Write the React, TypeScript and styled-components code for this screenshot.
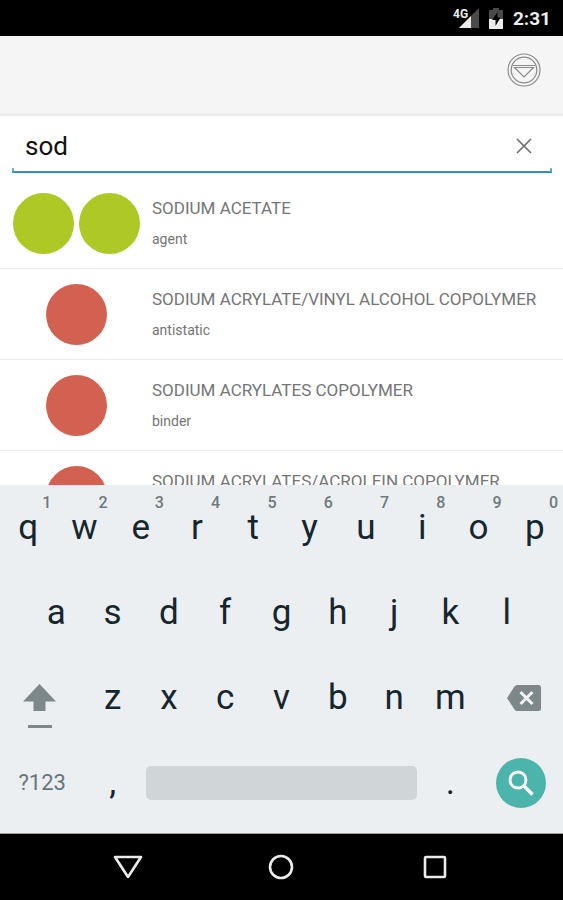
import React, { useState } from 'react';
import styled, { createGlobalStyle } from 'styled-components';

const GlobalStyle = createGlobalStyle`
  *, *::before, *::after { box-sizing: border-box; }
  body { margin: 0; background: #fff; font-family: Roboto, "Open Sans", sans-serif; }
  button, input { font: inherit; color: inherit; }
`;

const Screen = styled.div`
  display: flex;
  flex-direction: column;
  height: 100vh;
  overflow: hidden;
`;

const StatusBar = styled.header`
  display: flex;
  flex: none;
  align-items: center;
  justify-content: flex-end;
  gap: 10px;
  height: 36px;
  padding-right: 12px;
  background: #000;
  color: #ececec;
`;

const Clock = styled.time`
  font-size: 19px;
  line-height: 24px;
  font-weight: 700;
  padding-top: 2px;
`;

const Toolbar = styled.div`
  display: flex;
  flex: none;
  align-items: flex-start;
  justify-content: flex-end;
  height: 80px;
  padding: 17px 22px 0;
  background: #f5f5f5;
  border-bottom: 3px solid #ececec;
`;

const IconButton = styled.button`
  display: flex;
  flex: none;
  align-items: center;
  justify-content: center;
  padding: 0;
  border: 0;
  background: none;
  cursor: pointer;
`;

const SearchBar = styled.label`
  display: flex;
  flex: none;
  align-items: center;
  height: 57px;
  margin: 0 11px 5px 12px;
  padding: 3px 20px 0 13px;
  color: #111;
  background:
    linear-gradient(#7db8d8, #3a94c2) 0 100% / 2px 5px no-repeat,
    linear-gradient(#7db8d8, #3a94c2) 100% 100% / 2px 5px no-repeat,
    linear-gradient(#3a98c8, #2f86b6) 0 100% / 100% 2px no-repeat;
`;

const SearchInput = styled.input`
  flex: 1;
  min-width: 0;
  height: 32px;
  padding: 0;
  border: 0;
  outline: 0;
  background: none;
  font-size: 26px;
  line-height: 32px;
`;

const Results = styled.ul`
  flex: 1;
  min-height: 0;
  margin: 0;
  padding: 0;
  overflow: hidden;
  list-style: none;
`;

const Result = styled.li`
  display: flex;
  align-items: center;
  gap: 12px;
  height: 91px;
  padding: 0 12px;
  border-bottom: 1px solid #ebebeb;
`;

const Ratings = styled.div`
  display: flex;
  flex: none;
  justify-content: center;
  gap: 5px;
  width: 128px;
`;

const Rating = styled.span<{ $color: string }>`
  width: 61px;
  height: 61px;
  border-radius: 50%;
  background: ${(p) => p.$color};
`;

const Description = styled.div`
  display: flex;
  flex-direction: column;
  gap: 10px;
  color: #757575;
  white-space: nowrap;
`;

const Name = styled.span`
  font-size: 17px;
  line-height: 22px;
`;

const Purpose = styled.span`
  font-size: 14px;
  line-height: 20px;
`;

const Keyboard = styled.section`
  flex: none;
  padding-bottom: 8px;
  background: #eceff1;
  border-bottom: 1px solid #9b9d9e;
  color: #16262e;
`;

const KeyRow = styled.div<{ $inset?: boolean }>`
  display: flex;
  height: 85px;
  padding: 0 ${(p) => (p.$inset ? '5%' : '0')};
`;

const Key = styled.button<{ $span?: number; $tone?: string; $small?: boolean }>`
  position: relative;
  display: flex;
  flex: ${(p) => p.$span ?? 1} 1 0;
  min-width: 0;
  align-items: center;
  justify-content: center;
  padding: 0;
  border: 0;
  background: none;
  color: ${(p) => p.$tone ?? 'inherit'};
  font-size: ${(p) => (p.$small ? 22 : 35)}px;
  line-height: 40px;
  cursor: pointer;
`;

const EdgeKey = styled(Key)<{ $side: 'left' | 'right' }>`
  justify-content: ${(p) => (p.$side === 'left' ? 'flex-start' : 'flex-end')};

  > svg {
    flex: none;
    margin: 0 22px;
  }
`;

const Hint = styled.span`
  position: absolute;
  top: 8px;
  right: 5px;
  color: #6f7a7e;
  font-size: 16px;
  line-height: 20px;
  font-weight: 500;
`;

const SpaceFace = styled.span`
  flex: 1;
  height: 34px;
  margin: 0 5px;
  border-radius: 5px;
  background: #d0d5d8;
`;

const SearchFace = styled.span`
  display: flex;
  align-items: center;
  justify-content: center;
  width: 50px;
  height: 50px;
  border-radius: 50%;
  background: #4cb5ab;
`;

const NavBar = styled.nav`
  display: flex;
  flex: none;
  justify-content: center;
  height: 66px;
  padding: 0 9%;
  background: #000;
`;

const NavButton = styled(IconButton)`
  flex: 1;
`;

const GREEN = '#aec926';
const RED = '#d26152';

const results = [
  { name: 'SODIUM ACETATE', purpose: 'agent', ratings: [GREEN, GREEN] },
  { name: 'SODIUM ACRYLATE/VINYL ALCOHOL COPOLYMER', purpose: 'antistatic', ratings: [RED] },
  { name: 'SODIUM ACRYLATES COPOLYMER', purpose: 'binder', ratings: [RED] },
  { name: 'SODIUM ACRYLATES/ACROLEIN COPOLYMER', purpose: '', ratings: [RED] },
];

const SignalIcon = () => (
  <svg width="26" height="22" viewBox="0 0 26 22" aria-label="4G signal">
    <path d="M26 1V21H6Z" fill="#4a4a4a" />
    <path d="M18 9V21H6Z" fill="#ececec" />
    <text x="0" y="11" fontSize="12" fontWeight="700" fill="#ececec" stroke="#000" strokeWidth="2" paintOrder="stroke">4G</text>
  </svg>
);

const BatteryIcon = () => (
  <svg width="14" height="21" viewBox="0 0 14 21" aria-label="Battery charging">
    <path d="M4 0H10V2H14V11H0V2H4Z" fill="#4a4a4a" />
    <path d="M0 11H14V21H0Z" fill="#ececec" />
    <path d="M8.500 4L3 12H6.500V18L11.500 9.500H8.500Z" fill="#000" />
  </svg>
);

const FilterIcon = () => (
  <svg width="34" height="34" viewBox="0 0 34 34" fill="none" stroke="#8a8a8a" strokeWidth="1.200">
    <circle cx="17" cy="17" r="16" />
    <circle cx="17" cy="17" r="12.800" />
    <path d="M6 12.500H28M7.500 14.500H26.500L17 24Z" />
  </svg>
);

const ClearIcon = () => (
  <svg width="16" height="16" viewBox="0 0 16 16" stroke="#707070" strokeWidth="1.700">
    <path d="M1 1L15 15M15 1L1 15" />
  </svg>
);

const ShiftIcon = () => (
  <svg width="34" height="62" viewBox="0 0 34 62" fill="#7d888b">
    <path d="M17.500 17L34 34.500H23.500V44H11.500V34.500H1Z" />
    <path d="M6 58H30V61H6Z" />
  </svg>
);

const BackspaceIcon = () => (
  <svg width="34" height="26" viewBox="0 0 34 26">
    <path d="M0 13L7.500 1.500Q8.500 0 10.500 0H31.500Q34 0 34 2.500V23.500Q34 26 31.500 26H10.500Q8.500 26 7.500 24.500Z" fill="#7d888b" />
    <path d="M13.500 7L25.500 19M25.500 7L13.500 19" stroke="#f2f4f5" strokeWidth="3" />
  </svg>
);

const MagnifierIcon = () => (
  <svg width="26" height="26" viewBox="0 0 26 26" fill="none" stroke="#fff">
    <circle cx="10" cy="10" r="8" strokeWidth="2.800" />
    <path d="M15.500 15.500L24.500 24.500" strokeWidth="3.600" />
  </svg>
);

const NavIcon = ({ children }: { children: React.ReactNode }) => (
  <svg width="30" height="26" viewBox="0 0 30 26" fill="none" stroke="#ececec" strokeWidth="2.600" strokeLinejoin="round">
    {children}
  </svg>
);

export default function App() {
  const [query, setQuery] = useState('sod');
  const type = (letter: string) => setQuery((q) => q + letter);

  return (
    <Screen>
      <GlobalStyle />
      <StatusBar>
        <SignalIcon />
        <BatteryIcon />
        <Clock>2:31</Clock>
      </StatusBar>
      <Toolbar>
        <IconButton aria-label="Filter"><FilterIcon /></IconButton>
      </Toolbar>
      <SearchBar>
        <SearchInput aria-label="Search ingredients" value={query} onChange={(e) => setQuery(e.target.value)} />
        <IconButton aria-label="Clear" onClick={() => setQuery('')}><ClearIcon /></IconButton>
      </SearchBar>
      <Results>
        {results.map((item) => (
          <Result key={item.name}>
            <Ratings>
              {item.ratings.map((color, i) => <Rating key={i} $color={color} />)}
            </Ratings>
            <Description>
              <Name>{item.name}</Name>
              <Purpose>{item.purpose || '\u00a0'}</Purpose>
            </Description>
          </Result>
        ))}
      </Results>
      <Keyboard aria-label="Keyboard">
        <KeyRow>
          {[...'qwertyuiop'].map((letter, i) => (
            <Key key={letter} onClick={() => type(letter)}>
              {letter}
              <Hint>{(i + 1) % 10}</Hint>
            </Key>
          ))}
        </KeyRow>
        <KeyRow $inset>
          {[...'asdfghjkl'].map((letter) => (
            <Key key={letter} onClick={() => type(letter)}>{letter}</Key>
          ))}
        </KeyRow>
        <KeyRow>
          <EdgeKey $span={1.5} $side="left" aria-label="Shift"><ShiftIcon /></EdgeKey>
          {[...'zxcvbnm'].map((letter) => (
            <Key key={letter} onClick={() => type(letter)}>{letter}</Key>
          ))}
          <EdgeKey $span={1.5} $side="right" aria-label="Backspace" onClick={() => setQuery((q) => q.slice(0, -1))}><BackspaceIcon /></EdgeKey>
        </KeyRow>
        <KeyRow>
          <Key $span={1.5} $small $tone="#66757b">?123</Key>
          <Key onClick={() => type(',')}>,</Key>
          <Key $span={5} aria-label="Space" onClick={() => type(' ')}><SpaceFace /></Key>
          <Key onClick={() => type('.')}>.</Key>
          <Key $span={1.5} aria-label="Search"><SearchFace><MagnifierIcon /></SearchFace></Key>
        </KeyRow>
      </Keyboard>
      <NavBar>
        <NavButton aria-label="Back"><NavIcon><path d="M2 3H28L15 23Z" /></NavIcon></NavButton>
        <NavButton aria-label="Home"><NavIcon><circle cx="15" cy="13" r="11" /></NavIcon></NavButton>
        <NavButton aria-label="Recent apps"><NavIcon><rect x="5" y="3" width="20" height="20" rx="1" /></NavIcon></NavButton>
      </NavBar>
    </Screen>
  );
}
